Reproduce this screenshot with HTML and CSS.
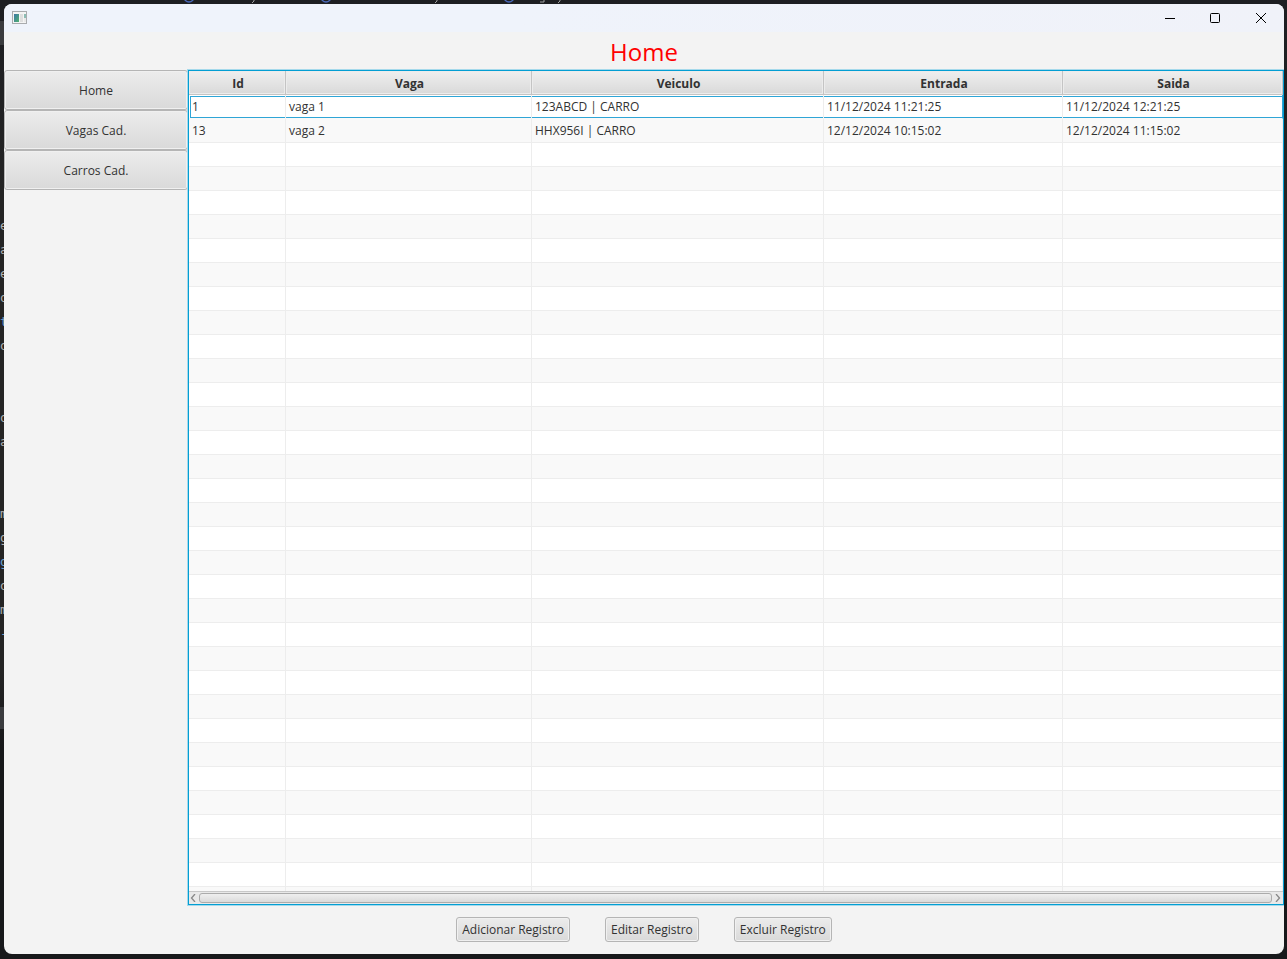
FILE: index.html
```html
<!DOCTYPE html>
<html lang="pt-BR">
<head>
<meta charset="utf-8">
<title>Home</title>
<link rel="stylesheet" href="styles.css">
</head>
<body>
<div class="tabs-behind" aria-hidden="true">
  <svg width="600" height="4"><g fill="none" stroke="#4a68b8" stroke-width="1.300"><circle cx="189" cy="-3" r="5"/><circle cx="326" cy="-3" r="5"/><circle cx="509" cy="-3" r="5"/></g><path d="M254 0v1l-2 2M437 0v1l-2 2M560 0v1l-2 2M540 2h4v-2" fill="none" stroke="#a0a0a0"/></svg>
</div>
<div class="band band-top" aria-hidden="true"></div>
<div class="band band-bottom" aria-hidden="true"></div>
<div class="code-behind" aria-hidden="true"><div>e</div><div>a</div><div>e</div><div>o</div><div class="blue">t</div><div>o</div><div></div><div></div><div>o</div><div>a</div><div></div><div></div><div>m</div><div>g</div><div class="blue">g</div><div>o</div><div>m</div><div class="blue">-</div></div>
<div class="window">
  <header class="titlebar">
    <svg class="app-icon" width="16" height="14" viewBox="0 0 16 14"><defs><linearGradient id="g" x1="0" y1="0" x2="1" y2="1"><stop offset="0" stop-color="#3c78a8"/><stop offset="1" stop-color="#52b070"/></linearGradient></defs><rect x=".5" y=".5" width="14" height="12" fill="#f4f4f4" stroke="#a9abae"/><rect x="2" y="3" width="5" height="8" fill="url(#g)"/><rect x="8" y="3" width="3" height="8" fill="#dedede"/><rect x="12" y="3" width="2" height="4" fill="#8cbcb4"/><rect x="12" y="7" width="2" height="4" fill="#e8e8e8"/></svg>
    <div class="controls">
      <button aria-label="Minimizar"><svg width="12" height="12"><path d="M2 6.5h10" stroke="#000"/></svg></button>
      <button aria-label="Maximizar"><svg width="12" height="12"><rect x="1.500" y="1.500" width="9" height="9" rx="1" fill="none" stroke="#000"/></svg></button>
      <button aria-label="Fechar"><svg width="12" height="12"><path d="M1 1l10 10M11 1L1 11" stroke="#000"/></svg></button>
    </div>
  </header>
  <h1 class="title">Home</h1>
  <div class="body">
    <nav class="side">
      <button class="btn">Home</button>
      <button class="btn">Vagas Cad.</button>
      <button class="btn">Carros Cad.</button>
    </nav>
    <main class="grid">
      <div class="rows">
        <table>
          <colgroup><col class="c-id"><col class="c-vaga"><col class="c-veiculo"><col class="c-entrada"><col></colgroup>
          <thead><tr><th>Id</th><th>Vaga</th><th>Veiculo</th><th>Entrada</th><th>Saida</th></tr></thead>
          <tbody id="rows">
            <tr class="focused"><td>1</td><td>vaga 1</td><td>123ABCD | CARRO</td><td>11/12/2024 11:21:25</td><td>11/12/2024 12:21:25</td></tr>
            <tr><td>13</td><td>vaga 2</td><td>HHX956I | CARRO</td><td>12/12/2024 10:15:02</td><td>12/12/2024 11:15:02</td></tr>
          </tbody>
        </table>
      </div>
      <div class="scrollbar">
        <svg width="6" height="8"><path d="M5 0L1.500 4L5 8" fill="none" stroke="#888" stroke-width="1.300"/></svg>
        <div class="thumb"></div>
        <svg width="6" height="8"><path d="M1 0L4.500 4L1 8" fill="none" stroke="#888" stroke-width="1.300"/></svg>
      </div>
    </main>
  </div>
  <footer class="actions">
    <button class="btn">Adicionar Registro</button>
    <button class="btn">Editar Registro</button>
    <button class="btn">Excluir Registro</button>
  </footer>
</div>
<script src="rows.js"></script>
</body>
</html>
```
FILE: styles.css
```css
* { box-sizing: border-box; }
body {
  margin: 0;
  height: 100vh;
  padding: 4px 3px 5px 4px;
  overflow: hidden;
  background: linear-gradient(#1d1e22, #242424 20%, #242424 70%, #17181a 78%);
  font: 12px/16px "Open Sans", "Noto Sans", sans-serif;
  color: #323232;
}
button { font: inherit; color: inherit; }
svg { display: block; }
.tabs-behind { position: absolute; top: 0; left: 0; }
.band { position: absolute; left: 0; width: 4px; background: #3a3b3e; }
.band-top { top: 21px; height: 24px; }
.band-bottom { top: 707px; height: 22px; }
.code-behind {
  position: absolute;
  top: 214px;
  left: 0;
  font: 13px/24px "DejaVu Sans Mono", monospace;
  color: #b0b0b0;
}
.code-behind div { height: 24px; }
.code-behind .blue { color: #6a9fd0; }
.window {
  position: relative;
  height: 100%;
  display: flex;
  flex-direction: column;
  background: #f3f3f3;
  border-radius: 8px;
  overflow: hidden;
}
.titlebar {
  height: 28px;
  display: flex;
  justify-content: space-between;
  align-items: center;
  padding-left: 8px;
  background: linear-gradient(90deg, #eff3fb 40%, #f0f2f9);
}
.controls { display: flex; height: 100%; }
.controls button {
  width: 46px;
  display: flex;
  align-items: center;
  justify-content: center;
  padding: 0;
  border: 0;
  background: none;
}
.title {
  margin: 0;
  height: 38px;
  font-size: 24px;
  line-height: 40px;
  font-weight: 400;
  text-align: center;
  color: #f00;
}
.body { flex: 1; min-height: 0; display: flex; }
.side { width: 184px; }
.btn {
  border: 1px solid #b5b5b5;
  border-radius: 3px;
  background: linear-gradient(#ececec, #d9d9d9);
  box-shadow: inset 0 0 0 1px #f0f0f0;
}
.side .btn { display: block; width: 100%; height: 40px; padding: 2px 0 0; }
.grid {
  flex: 1;
  min-width: 0;
  display: flex;
  flex-direction: column;
  border: 1px solid #039ed3;
  box-shadow: 0 0 0 1px #a5d9eb;
  background: #fff;
}
.rows { flex: 1; min-height: 0; overflow: hidden; }
table { width: 100%; table-layout: fixed; border-collapse: separate; border-spacing: 0; }
.c-id { width: 97px; }
.c-vaga { width: 246px; }
.c-veiculo { width: 292px; }
.c-entrada { width: 239px; }
th {
  height: 24px;
  padding: 2px 0 0 2px;
  font-weight: 700;
  background: linear-gradient(#efefef, #d9d9d9);
  border-right: 1px solid #c4c4c4;
  border-bottom: 1px solid #c4c4c4;
  box-shadow: inset 0 0 0 1px #ececec;
}
td {
  height: 24px;
  padding: 0 3px;
  border-right: 1px solid #ededed;
  border-bottom: 1px solid #ededed;
  white-space: nowrap;
}
tbody tr:nth-child(even) { background: #f9f9f9; }
.focused td { box-shadow: inset 0 1px #fff, inset 0 2px #2fa5d6, inset 0 -1px #2fa5d6; border-bottom-color: #f9f9f9; }
.focused td:first-child { box-shadow: inset 0 1px #fff, inset 1px 0 #fff, inset 2px 2px #2fa5d6, inset 0 -1px #2fa5d6; }
.focused td:last-child { border-right-color: #2fa5d6; }
.scrollbar {
  height: 13px;
  display: flex;
  align-items: center;
  justify-content: space-between;
  gap: 3px;
  padding: 0 2px 0 1px;
  border-top: 1px solid #c8c8c8;
  background: #e9e9e9;
}
.thumb {
  flex: 1;
  height: 10px;
  border: 1px solid #ababab;
  border-radius: 3px;
  background: linear-gradient(#efefef, #dadada);
}
.actions {
  height: 49px;
  display: flex;
  align-items: center;
  justify-content: center;
  gap: 35px;
}
.actions .btn { height: 25px; padding: 1px 5px 0; }
```
FILE: rows.js
```js
const body = document.getElementById("rows");
for (let i = 0; i < 60; i++) {
  const row = body.insertRow();
  for (let c = 0; c < 5; c++) row.insertCell();
}
```
